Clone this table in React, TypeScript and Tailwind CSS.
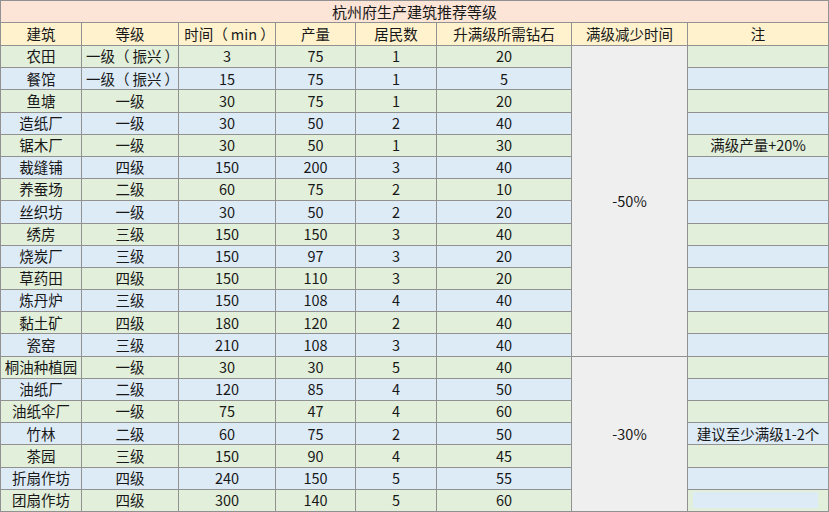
import React from "react";

type Row = {
  name: string;
  level: string;
  time: number;
  output: number;
  residents: number;
  diamonds: number;
  note?: string;
};

const rows: Row[] = [
  { name: "农田", level: "一级（振兴）", time: 3, output: 75, residents: 1, diamonds: 20 },
  { name: "餐馆", level: "一级（振兴）", time: 15, output: 75, residents: 1, diamonds: 5 },
  { name: "鱼塘", level: "一级", time: 30, output: 75, residents: 1, diamonds: 20 },
  { name: "造纸厂", level: "一级", time: 30, output: 50, residents: 2, diamonds: 40 },
  { name: "锯木厂", level: "一级", time: 30, output: 50, residents: 1, diamonds: 30, note: "满级产量+20%" },
  { name: "裁缝铺", level: "四级", time: 150, output: 200, residents: 3, diamonds: 40 },
  { name: "养蚕场", level: "二级", time: 60, output: 75, residents: 2, diamonds: 10 },
  { name: "丝织坊", level: "一级", time: 30, output: 50, residents: 2, diamonds: 20 },
  { name: "绣房", level: "三级", time: 150, output: 150, residents: 3, diamonds: 40 },
  { name: "烧炭厂", level: "三级", time: 150, output: 97, residents: 3, diamonds: 20 },
  { name: "草药田", level: "四级", time: 150, output: 110, residents: 3, diamonds: 20 },
  { name: "炼丹炉", level: "三级", time: 150, output: 108, residents: 4, diamonds: 40 },
  { name: "黏土矿", level: "四级", time: 180, output: 120, residents: 2, diamonds: 40 },
  { name: "瓷窑", level: "三级", time: 210, output: 108, residents: 3, diamonds: 40 },
  { name: "桐油种植园", level: "一级", time: 30, output: 30, residents: 5, diamonds: 40 },
  { name: "油纸厂", level: "二级", time: 120, output: 85, residents: 4, diamonds: 50 },
  { name: "油纸伞厂", level: "一级", time: 75, output: 47, residents: 4, diamonds: 60 },
  { name: "竹林", level: "二级", time: 60, output: 75, residents: 2, diamonds: 50, note: "建议至少满级1-2个" },
  { name: "茶园", level: "三级", time: 150, output: 90, residents: 4, diamonds: 45 },
  { name: "折扇作坊", level: "四级", time: 240, output: 150, residents: 5, diamonds: 55 },
  { name: "团扇作坊", level: "四级", time: 300, output: 140, residents: 5, diamonds: 60 },
];

const headers = ["建筑", "等级", "时间（min）", "产量", "居民数", "升满级所需钻石", "满级减少时间", "注"];

// full-width parens sit flush against the text in Noto; the original font pads them
function Parens({ text }: { text: string }) {
  const parts = text.split(/([（）])/);
  return (
    <>
      {parts.map((p, i) =>
        p === "（" ? (
          <span key={i} className="pr-[3px]">（</span>
        ) : p === "）" ? (
          <span key={i} className="pl-[3px] -mr-[5px]">）</span>
        ) : (
          <span key={i}>{p}</span>
        )
      )}
    </>
  );
}

function Cell({ children, className = "" }: { children?: React.ReactNode; className?: string }) {
  return (
    <div className={`flex items-center justify-center whitespace-nowrap leading-none ${className}`}>
      {children}
    </div>
  );
}

export default function App() {
  return (
    <div
      className="w-[829px] h-[512px] bg-[#919191] p-px grid gap-px text-[14.5px] text-[#181818] grid-cols-[80px_96px_96px_79px_80px_134px_115px_1fr] grid-rows-[21px_22px_repeat(21,minmax(0,1fr))]"
      style={{ fontFamily: '"Noto Sans CJK SC", "Noto Sans", sans-serif' }}
    >
      <Cell className="col-span-8 bg-[#fce4d6] text-[15px]">杭州府生产建筑推荐等级</Cell>

      {headers.map((h) => (
        <Cell key={h} className="bg-[#fff2cc]">
          <Parens text={h} />
        </Cell>
      ))}

      {rows.map((r, i) => {
        const bg = i % 2 === 0 ? "bg-[#e2efda]" : "bg-[#ddebf7]";
        const isLast = i === rows.length - 1;
        return (
          <React.Fragment key={r.name}>
            <Cell className={bg}>{r.name}</Cell>
            <Cell className={bg}>
              <Parens text={r.level} />
            </Cell>
            <Cell className={bg}>{r.time}</Cell>
            <Cell className={bg}>{r.output}</Cell>
            <Cell className={bg}>{r.residents}</Cell>
            <Cell className={bg}>{r.diamonds}</Cell>
            {i === 0 && <Cell className="row-span-14 bg-[#efefef]">-50%</Cell>}
            {i === 14 && <Cell className="row-span-7 bg-[#efefef]">-30%</Cell>}
            {isLast ? (
              <div className={`${bg} pl-[5px] pr-[10px] pt-[2px] pb-[3px]`}>
                <div className="h-full bg-[#ddebf7]" />
              </div>
            ) : (
              <Cell className={bg}>{r.note}</Cell>
            )}
          </React.Fragment>
        );
      })}
    </div>
  );
}
